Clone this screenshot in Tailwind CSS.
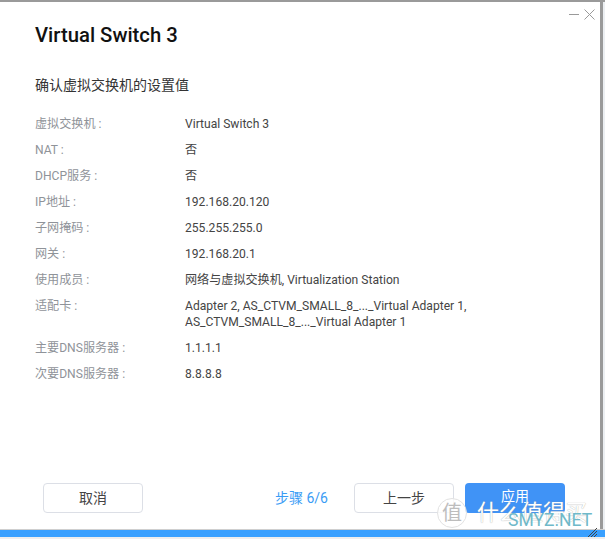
<!DOCTYPE html>
<html lang="zh-CN">
<head>
    <meta charset="UTF-8">
    <title>Virtual Switch 3</title>
    <script src="https://cdn.jsdelivr.net/npm/@tailwindcss/browser@4"></script>
</head>
<body class="w-[605px] h-[539px] overflow-hidden relative bg-white font-['Roboto','Noto_Sans_CJK_SC',sans-serif]">
    <div class="flex flex-col h-full">
        <div class="h-[2px] bg-[#9a9a9a]"></div>
        <div class="flex flex-1 min-h-0">
            <main class="flex-1 flex flex-col bg-white relative">
                <div class="absolute top-[7px] right-[5px] flex items-center gap-[5px]">
                    <div class="w-[10px] h-[1px] bg-[#9a9a9a]"></div>
                    <svg width="11" height="11" viewBox="0 0 11 11" fill="none" stroke="#9a9a9a" stroke-width="1"><path d="M0.5 0.5L10.5 10.5M10.5 0.5L0.5 10.5"/></svg>
                </div>
                <h1 class="pl-[35px] pt-[20px] text-[20.3px] leading-[26px] font-medium text-[#111]">Virtual Switch 3</h1>
                <h2 class="pl-[35px] mt-[27px] text-[14px] leading-[20px] text-[#333]">确认虚拟交换机的设置值</h2>
                <dl class="pl-[35px] mt-[21px] flex flex-col gap-[10px] text-[12.1px] leading-[16px]">
                    <div class="flex"><dt class="w-[150px] text-[#8f9399]">虚拟交换机 :</dt><dd class="text-[#444]">Virtual Switch 3</dd></div>
                    <div class="flex"><dt class="w-[150px] text-[#8f9399]">NAT :</dt><dd class="text-[#444]">否</dd></div>
                    <div class="flex"><dt class="w-[150px] text-[#8f9399]">DHCP服务 :</dt><dd class="text-[#444]">否</dd></div>
                    <div class="flex"><dt class="w-[150px] text-[#8f9399]">IP地址 :</dt><dd class="text-[#444]">192.168.20.120</dd></div>
                    <div class="flex"><dt class="w-[150px] text-[#8f9399]">子网掩码 :</dt><dd class="text-[#444]">255.255.255.0</dd></div>
                    <div class="flex"><dt class="w-[150px] text-[#8f9399]">网关 :</dt><dd class="text-[#444]">192.168.20.1</dd></div>
                    <div class="flex"><dt class="w-[150px] text-[#8f9399]">使用成员 :</dt><dd class="text-[#444]">网络与虚拟交换机, Virtualization Station</dd></div>
                    <div class="flex"><dt class="w-[150px] text-[#8f9399]">适配卡 :</dt><dd class="text-[#444]">Adapter 2, AS_CTVM_SMALL_8_..._Virtual Adapter 1,<br>AS_CTVM_SMALL_8_..._Virtual Adapter 1</dd></div>
                    <div class="flex"><dt class="w-[150px] text-[#8f9399]">主要DNS服务器 :</dt><dd class="text-[#444]">1.1.1.1</dd></div>
                    <div class="flex"><dt class="w-[150px] text-[#8f9399]">次要DNS服务器 :</dt><dd class="text-[#444]">8.8.8.8</dd></div>
                </dl>
                <footer class="mt-auto mb-[16px] pl-[43px] pr-[35px] flex items-center">
                    <button class="w-[100px] h-[30px] border border-[#dcdfe6] rounded-[4px] text-[14px] text-[#444]">取消</button>
                    <span class="ml-auto text-[14px] text-[#3a9cf5]">步骤 6/6</span>
                    <button class="ml-[26px] w-[100px] h-[30px] border border-[#dcdfe6] rounded-[4px] text-[14px] text-[#444]">上一步</button>
                    <button class="ml-[11px] w-[100px] h-[30px] bg-[#4093f6] rounded-[4px] pb-[3px] text-[14px] text-white">应用</button>
                </footer>
            </main>
            <div class="w-[3px] bg-[#9a9a9a]"></div>
            <div class="w-[2px] bg-[#eceff2]"></div>
        </div>
        <div class="h-[1px] bg-[#cfcfcf]"></div>
        <div class="h-[7px] bg-[#39a0ff]"></div>
        <div class="h-[2px] bg-[#eeeeee]"></div>
    </div>

    <!-- watermark over the corner -->
    <div class="absolute left-[437px] top-[498px] w-[30px] h-[30px] rounded-full bg-white/80 border border-[#e2e2e2] flex items-center justify-center text-[20px] leading-none text-[#bdbdbd]">值</div>
    <div class="absolute left-[477px] top-[499px] text-[22px] leading-[28px] whitespace-nowrap text-white [text-shadow:0_0_1px_#999]">什么值得买</div>
    <div class="absolute left-[508px] top-[511px] text-[17.5px] leading-[19px] whitespace-nowrap text-[#6fb9c9]">SMYZ.NET</div>
    <svg class="absolute left-[588px] top-[528px]" width="9" height="9" viewBox="0 0 9 9" stroke="#444" stroke-width="1"><path d="M0 9L9 0M3 9L9 3M6 9L9 6"/></svg>
</body>
</html>
